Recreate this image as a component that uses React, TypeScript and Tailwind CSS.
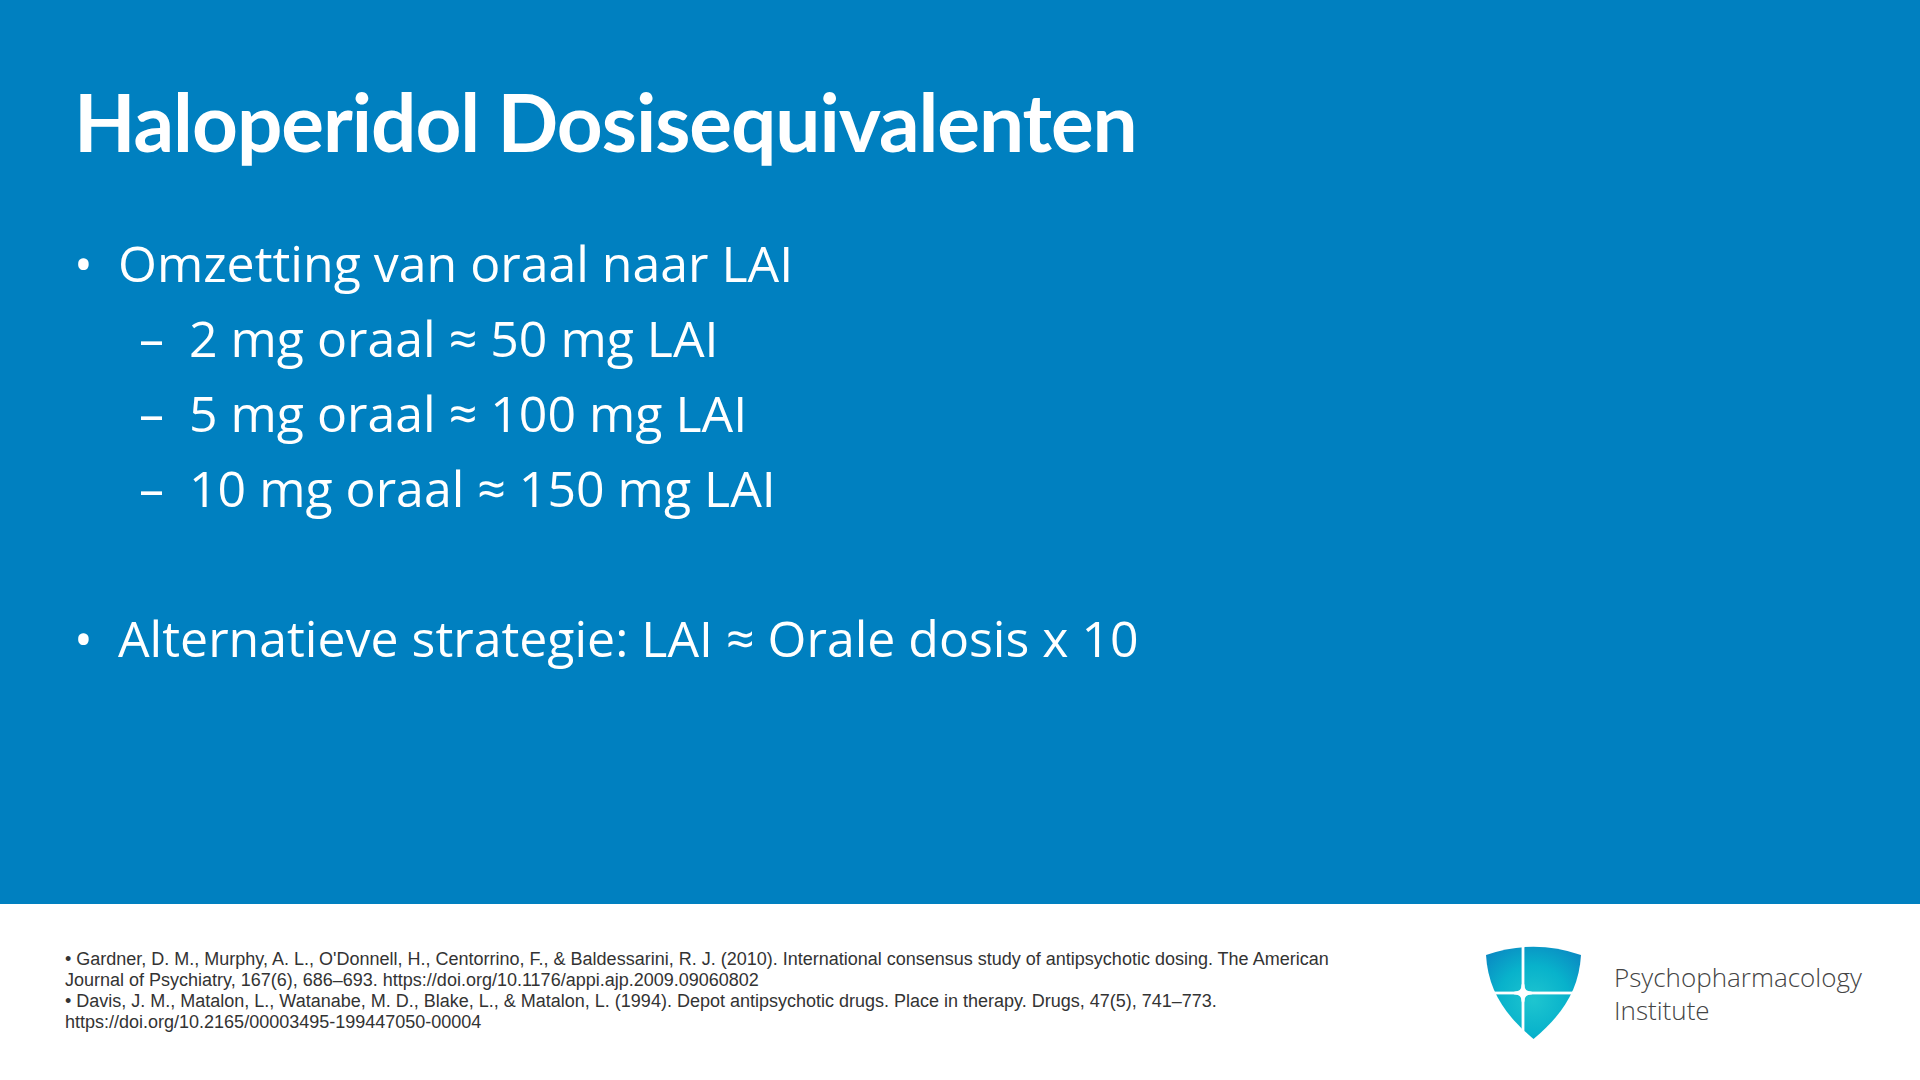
import React from "react";

function Shield() {
  return (
    <svg width="96" height="94" viewBox="0 0 96 94" className="block shrink-0">
      <defs>
        <radialGradient id="sg" cx="0.5" cy="0.58" r="0.68">
          <stop offset="0" stopColor="#1ec5d0" />
          <stop offset="0.55" stopColor="#08b2cb" />
          <stop offset="1" stopColor="#0a8bc3" />
        </radialGradient>
      </defs>
      <path d="M0,9 Q47.5,-7.5 95,9 C93,45 75,70 47.5,93 C20,70 2,45 0,9 Z" fill="url(#sg)" />
      <g fill="#ffffff">
        <rect x="35.6" y="0" width="2.8" height="94" />
        <rect x="0" y="45.6" width="96" height="2.8" />
        <path d="M37,39 Q37,47 45,47 Q37,47 37,55 Q37,47 29,47 Q37,47 37,39 Z" stroke="#ffffff" strokeWidth="3" strokeLinejoin="round" />
      </g>
    </svg>
  );
}

export default function App() {
  const body = { fontFamily: '"Open Sans", "Noto Sans", sans-serif' };
  const subs = [
    "2 mg oraal ≈ 50 mg LAI",
    "5 mg oraal ≈ 100 mg LAI",
    "10 mg oraal ≈ 150 mg LAI",
  ];
  return (
    <div className="w-[1920px] h-[1080px] flex flex-col overflow-hidden">
      <div className="h-[904px] bg-[#0080c0] text-white flex flex-col">
        <h1
          className="pl-[74px] pt-[81px] text-[80px] leading-[80px] font-bold tracking-[-0.013em]"
          style={{ fontFamily: 'Lato, "Open Sans", sans-serif' }}
        >
          Haloperidol Dosisequivalenten
        </h1>
        <div className="pt-[65px] text-[50px] leading-[75px]" style={body}>
          <div className="flex pl-[74px]">
            <span className="w-[44px] shrink-0">•</span>
            <span>Omzetting van oraal naar LAI</span>
          </div>
          {subs.map((s) => (
            <div key={s} className="flex pl-[139px]">
              <span className="w-[50px] shrink-0">–</span>
              <span>{s}</span>
            </div>
          ))}
          <div className="h-[75px]" />
          <div className="flex pl-[74px]">
            <span className="w-[44px] shrink-0">•</span>
            <span>Alternatieve strategie: LAI ≈ Orale dosis x 10</span>
          </div>
        </div>
      </div>
      <div className="flex-1 bg-white flex">
        <div
          className="pl-[65px] pt-[45px] text-[18px] leading-[20.9px] text-[#333333] flex-1 whitespace-nowrap"
          style={{ fontFamily: '"Liberation Sans", Arial, sans-serif' }}
        >
          <div>• Gardner, D. M., Murphy, A. L., O'Donnell, H., Centorrino, F., &amp; Baldessarini, R. J. (2010). International consensus study of antipsychotic dosing. The American</div>
          <div>Journal of Psychiatry, 167(6), 686–693. https://doi.org/10.1176/appi.ajp.2009.09060802</div>
          <div>• Davis, J. M., Matalon, L., Watanabe, M. D., Blake, L., &amp; Matalon, L. (1994). Depot antipsychotic drugs. Place in therapy. Drugs, 47(5), 741–773.</div>
          <div>https://doi.org/10.2165/00003495-199447050-00004</div>
        </div>
        <div className="w-[434px] shrink-0 flex items-start pt-[42px]">
          <Shield />
          <div
            className="ml-[32px] pt-[15px] text-[26px] leading-[33px] font-light text-[#444444] whitespace-nowrap"
            style={body}
          >
            <div>Psychopharmacology</div>
            <div>Institute</div>
          </div>
        </div>
      </div>
    </div>
  );
}
